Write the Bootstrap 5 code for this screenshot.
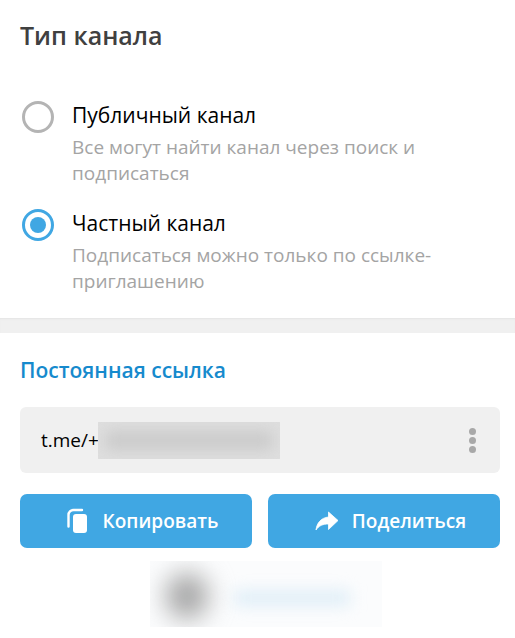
<!doctype html>
<html lang="ru">
<head>
<meta charset="utf-8">
<title>Тип канала</title>
<link href="https://cdn.jsdelivr.net/npm/bootstrap@5.3.0/dist/css/bootstrap.min.css" rel="stylesheet">
<style>
html,body{margin:0;height:638px;overflow:hidden;background:#fff}
body{font-family:"Open Sans","Noto Sans",sans-serif;color:#000}
.top-pane{height:318px;padding:0 20px}
.pane-title{font-size:25px;font-weight:600;color:#404040;line-height:28px;padding-top:21px;margin:0 0 52px}
.opt{gap:18px;margin-bottom:23px}
.opt-circle{width:32px;height:32px;flex:none;border-radius:50%;border:3px solid #b4b4b4;margin:0 0 0 2px;display:flex;align-items:center;justify-content:center}
.opt-circle.on{border-color:#40a7e3}
.opt-dot{width:16px;height:16px;border-radius:50%;background:#40a7e3}
.opt-name{font-size:21px;line-height:26px;margin-top:1px}
.opt-desc{font-size:19px;line-height:26px;color:#a4a4a4;margin-top:6px;width:400px}
.band{height:15px;background:#f0f0f0;box-shadow:inset 0 2px 2px -1px #e4e4e4}
.bottom-pane{padding:0 15px 0 20px}
.sec-title{font-size:21px;font-weight:600;color:#168acd;line-height:26px;margin:24px 0 24px}
.link-box{height:66px;background:#f0f0f0;border-radius:6px;padding-left:21px;padding-right:24px}
.link-text{font-size:19px;line-height:26px}
.hidden-part{width:182px;height:37px;background:#dedede;overflow:hidden;position:relative;margin-left:-1px}
.hidden-part::after{content:"";position:absolute;inset:9px 8px;background:#cbcbcb;filter:blur(7px)}
.kebab{width:7px;gap:2px}
.kebab i{display:block;width:7px;height:7px;border-radius:50%;background:#a8a8a8}
.act-row{gap:16px;margin-top:21px}
.act-btn{width:232px;height:54px;background:#40a7e3;border:0;border-radius:7px;color:#fff;font-size:19px;font-weight:600;padding:0}
.act-btn:hover,.act-btn:active{background:#40a7e3!important;color:#fff!important}
.act-btn svg{flex:none}
.act-copy{padding-left:12px;gap:15px}
.act-share{padding-left:13px;gap:13px}
.blur-strip{width:232px;height:66px;margin:13px 0 0 130px;overflow:hidden;position:relative;background:#fbfcfd}
.blur-av{position:absolute;left:16px;top:12px;width:42px;height:46px;border-radius:50%;background:#a2a2a2;filter:blur(13px)}
.blur-tx{position:absolute;left:84px;top:30px;width:116px;height:14px;background:#dcecf7;filter:blur(8px)}
</style>
</head>
<body>
<div class="top-pane">
  <h1 class="pane-title">Тип канала</h1>
  <div class="d-flex opt">
    <div class="opt-circle"></div>
    <div>
      <div class="opt-name">Публичный канал</div>
      <div class="opt-desc">Все могут найти канал через поиск и подписаться</div>
    </div>
  </div>
  <div class="d-flex opt">
    <div class="opt-circle on"><div class="opt-dot"></div></div>
    <div>
      <div class="opt-name">Частный канал</div>
      <div class="opt-desc">Подписаться можно только по ссылке-приглашению</div>
    </div>
  </div>
</div>
<div class="band"></div>
<div class="bottom-pane">
  <div class="sec-title">Постоянная ссылка</div>
  <div class="link-box d-flex align-items-center">
    <span class="link-text">t.me/+</span>
    <div class="hidden-part"></div>
    <div class="kebab d-flex flex-column ms-auto"><i></i><i></i><i></i></div>
  </div>
  <div class="d-flex act-row">
    <button type="button" class="btn act-btn act-copy d-flex align-items-center justify-content-center">
      <svg width="22" height="26" viewBox="0 0 22 26" aria-hidden="true"><rect x="7" y="6" width="14" height="19" rx="3" fill="#fff"/><path d="M16 2H7.5A5 5 0 0 0 2.500 7v11.500" fill="none" stroke="#fff" stroke-width="2.400" stroke-linecap="round"/></svg>
      <span>Копировать</span>
    </button>
    <button type="button" class="btn act-btn act-share d-flex align-items-center justify-content-center">
      <svg width="24" height="20" viewBox="0 0 24 20" aria-hidden="true"><path d="M13.500 1 23 9.500 13.500 18.500V13C8 13 4 14.500 1 19 1.800 12 6 6.800 13.500 6Z" fill="#fff" stroke="#fff" stroke-width=".8" stroke-linejoin="round"/></svg>
      <span>Поделиться</span>
    </button>
  </div>
  <div class="blur-strip"><div class="blur-av"></div><div class="blur-tx"></div></div>
</div>
<script src="https://cdn.jsdelivr.net/npm/bootstrap@5.3.0/dist/js/bootstrap.bundle.min.js"></script>
</body>
</html>
